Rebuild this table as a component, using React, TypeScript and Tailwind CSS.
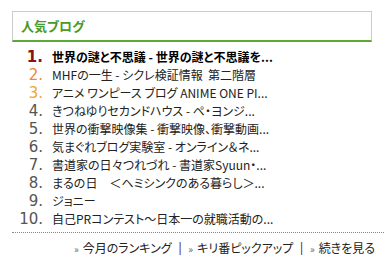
const ranks = [
  "世界の謎と不思議 - 世界の謎と不思議を...",
  "MHFの一生 - シクレ検証情報  第二階層",
  "アニメ ワンピース ブログ ANIME ONE PI...",
  "きつねゆりセカンドハウス - ペ・ヨンジ...",
  "世界の衝撃映像集 - 衝撃映像、衝撃動画...",
  "気まぐれブログ実験室 - オンライン＆ネ...",
  "書道家の日々つれづれ - 書道家Syuun・...",
  "まるの日　＜ヘミシンクのある暮らし＞...",
  "ジョニー",
  "自己PRコンテスト～日本一の就職活動の...",
];

const numColor = (i: number) =>
  i === 0 ? "text-[#8b1212] font-bold" : i === 1 ? "text-[#f0883a]" : i === 2 ? "text-[#f0a630]" : "text-[#555]";

export default function App() {
  const jp = "font-['Noto_Sans_CJK_JP',sans-serif] [font-feature-settings:'palt']";
  return (
    <div className="w-[384px] h-[263px] bg-white pt-[11px] pl-[12px] overflow-hidden">
      <div className="w-[360px] h-[31px] border border-[#cccccc] border-b-2 border-b-[#5aaa35] flex items-center pl-[8px]">
        <span className={`${jp} text-[13px] font-bold text-[#4a9a28]`}>人気ブログ</span>
      </div>

      <ol className="mt-[6px]">
        {ranks.map((t, i) => (
          <li key={i} className="flex items-center h-[18px]">
            <span
              className={`w-[31px] text-right font-['DejaVu_Sans',sans-serif] text-[15px] leading-[18px] ${numColor(i)}`}
            >
              {i + 1}.
            </span>
            <span
              className={`ml-[9px] ${jp} text-[12px] leading-[18px] whitespace-pre ${i === 0 ? "font-bold text-black" : "text-[#222]"}`}
            >
              {t}
            </span>
          </li>
        ))}
      </ol>

      <div className="mt-[4px] border-t border-dotted border-[#888] pt-[6px] pr-[9px] flex justify-end items-center gap-[5px] text-[12px] text-[#222]">
        <span className={jp}><span className="text-[10px] text-[#666] mr-[4px]">»</span>今月のランキング</span>
        <span className="text-[#552255]">|</span>
        <span className={jp}><span className="text-[10px] text-[#666] mr-[4px]">»</span>キリ番ピックアップ</span>
        <span className="text-[#552255]">|</span>
        <span className={jp}><span className="text-[10px] text-[#666] mr-[4px]">»</span>続きを見る</span>
      </div>
    </div>
  );
}
